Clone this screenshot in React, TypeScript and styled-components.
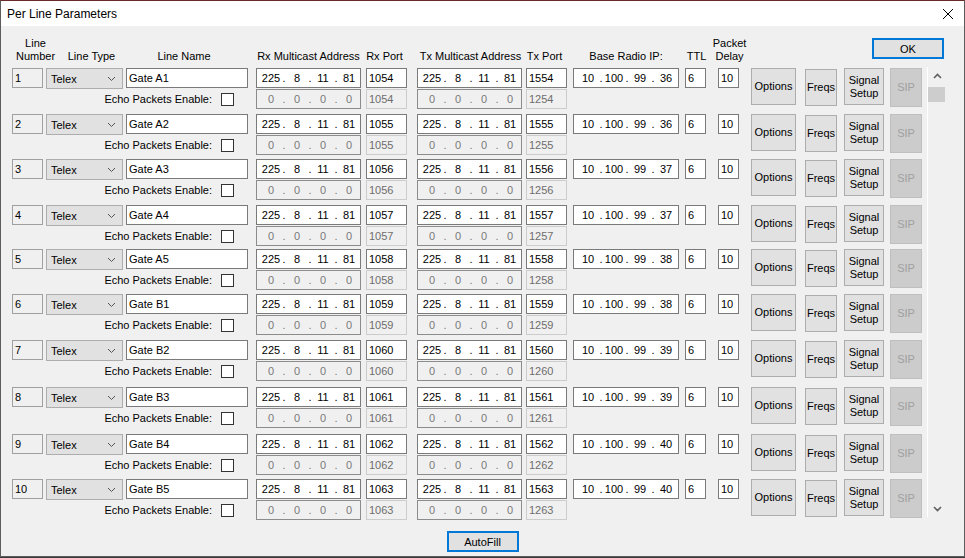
import React from 'react';
import styled, { createGlobalStyle, css } from 'styled-components';

const FONT = '"Liberation Sans", Arial, sans-serif';

// grid tracks shared by the header and each line (x of one column to x of the next)
const TRACKS = [34, 80, 130, 110, 51, 109, 47, 112, 33, 33, 54, 39, 46, 37];
const COLS = TRACKS.map(t => `${t}px`).join(' ');
const HEAD_COLS = TRACKS.slice(0, 10).map(t => `${t}px`).join(' ');

const GlobalStyle = createGlobalStyle`
  html, body {
    margin: 0;
    padding: 0;
    background: #3a3a3a;
  }
  body {
    font-family: ${FONT};
    font-size: 11px;
    color: #000;
  }
`;

// explicit cell placement inside a line's grid
interface CellProps {
  $c: number;
  $r?: number;
}
const cell = css<CellProps>`
  grid-column: ${p => p.$c};
  grid-row: ${p => p.$r || 1};
`;

const Window = styled.div`
  box-sizing: border-box;
  width: 965px;
  height: 557px;
  background: #f0f0f0;
  border: 1px solid #5c5c5c;
  border-top-color: #6b2a2a;
  display: flex;
  flex-direction: column;
  overflow: hidden;
`;

const TitleBar = styled.div`
  height: 25px;
  background: #fff;
  display: flex;
  align-items: center;
  padding: 0 10px 0 6px;
  font-size: 12px;
`;

const CloseBtn = styled.div`
  margin-left: auto;
  display: flex;
`;

const Header = styled.div`
  height: 37px;
  display: flex;
  justify-content: space-between;
  align-items: flex-start;
`;

const HeaderGrid = styled.div`
  display: grid;
  grid-template-columns: ${HEAD_COLS};
  align-items: end;
  height: 37px;
  padding-left: 11px;
`;

const HeadCell = styled.div<{ $w: number; $dx?: number }>`
  width: ${p => p.$w}px;
  margin-left: ${p => p.$dx || 0}px;
  display: flex;
  flex-direction: column;
  align-items: center;
  line-height: 13px;
  white-space: nowrap;
`;

const DialogButton = styled.button<{ $w: number }>`
  box-sizing: border-box;
  flex-shrink: 0;
  width: ${p => p.$w}px;
  height: 21px;
  padding: 0;
  background: #e1e1e1;
  border: 2px solid #0078d7;
  font-family: ${FONT};
  font-size: 11px;
  color: #000;
`;

const OkButton = styled(DialogButton)`
  margin: 12px 20px 0 0;
`;

const ListArea = styled.div`
  display: flex;
  align-items: flex-start;
  margin-top: 5px;
`;

const Rows = styled.div`
  width: 915px;
  padding-left: 11px;
  display: flex;
  flex-direction: column;
`;

const LineRow = styled.div<{ $h: number }>`
  display: grid;
  grid-template-columns: ${COLS};
  grid-template-rows: 20px 20px;
  row-gap: 1px;
  height: ${p => p.$h}px;
`;

const Field = styled.div<CellProps & { $w: number; $variant?: 'edit' | 'off' | 'readonly' }>`
  ${cell};
  box-sizing: border-box;
  width: ${p => p.$w}px;
  height: 20px;
  line-height: 18px;
  padding: 0 2px;
  white-space: nowrap;
  overflow: hidden;
  border: 1px solid ${p => (p.$variant === 'off' ? '#cccccc' : p.$variant === 'readonly' ? '#a0a0a0' : '#7a7a7a')};
  background: ${p => (p.$variant === 'off' || p.$variant === 'readonly' ? '#f0f0f0' : '#fff')};
  color: ${p => (p.$variant === 'off' ? '#6d6d6d' : '#000')};
`;

const IpBox = styled.div<CellProps & { $w: number; $off?: boolean }>`
  ${cell};
  box-sizing: border-box;
  width: ${p => p.$w}px;
  height: 20px;
  line-height: 18px;
  padding-left: 4px;
  display: flex;
  border: 1px solid ${p => (p.$off ? '#8c8c8c' : '#7a7a7a')};
  background: ${p => (p.$off ? '#f0f0f0' : '#fff')};
  color: ${p => (p.$off ? '#7a7a7a' : '#000')};
`;

const IpPart = styled.span`
  width: 20px;
  text-align: center;
`;

const IpDot = styled.span`
  width: 6px;
  text-align: center;
`;

const Select = styled.div<CellProps>`
  ${cell};
  box-sizing: border-box;
  width: 77px;
  height: 21px;
  display: flex;
  align-items: center;
  justify-content: space-between;
  padding: 0 6px 0 4px;
  background: #e1e1e1;
  border: 1px solid #adadad;
`;

const EchoLabel = styled.div`
  grid-column: 1 / 4;
  grid-row: 2;
  display: flex;
  justify-content: flex-end;
  align-items: center;
  gap: 9px;
  margin-right: 22px;
  white-space: nowrap;
`;

const Checkbox = styled.span`
  box-sizing: border-box;
  width: 13px;
  height: 13px;
  background: #fff;
  border: 1px solid #333;
`;

const ActionButton = styled.button<{ $c: number; $w: number; $off?: boolean; $top?: number }>`
  grid-column: ${p => p.$c};
  grid-row: 1 / 3;
  align-self: start;
  box-sizing: border-box;
  width: ${p => p.$w}px;
  height: ${p => (p.$off ? 39 : 37)}px;
  margin-top: ${p => p.$top || 0}px;
  padding: 0;
  line-height: 13px;
  font-family: ${FONT};
  font-size: 11px;
  background: ${p => (p.$off ? '#cccccc' : '#e1e1e1')};
  border: 1px solid ${p => (p.$off ? '#bfbfbf' : '#adadad')};
  color: ${p => (p.$off ? '#a0a0a0' : '#000')};
`;

const ScrollBar = styled.div`
  box-sizing: border-box;
  width: 19px;
  height: 450px;
  margin-top: -1px;
  border-left: 1px solid #fff;
  display: flex;
  flex-direction: column;
`;

const ArrowCell = styled.div`
  height: 17px;
  display: flex;
  align-items: center;
  justify-content: center;
`;

const Thumb = styled.div`
  margin-top: 3px;
  width: 17px;
  height: 15px;
  background: #cdcdcd;
`;

const Spacer = styled.div`
  flex: 1;
`;

const Footer = styled.div`
  display: flex;
  justify-content: center;
  padding-top: 6px;
`;

const Chevron = ({ up }: { up?: boolean }) => (
  <svg width="9" height="6" viewBox="0 0 9 6">
    <polyline
      points={up ? '1,5 4.5,1.5 8,5' : '1,1 4.5,4.5 8,1'}
      fill="none"
      stroke="#606060"
      strokeWidth="1.6"
    />
  </svg>
);

const Ip = ({ value, w, c, r, off }: { value: string; w: number; c: number; r?: number; off?: boolean }) => {
  const parts = value.split('.');
  return (
    <IpBox $w={w} $c={c} $r={r} $off={off}>
      {parts.map((p, i) => (
        <React.Fragment key={i}>
          <IpPart>{p}</IpPart>
          {i < 3 && <IpDot>.</IpDot>}
        </React.Fragment>
      ))}
    </IpBox>
  );
};

const names = ['Gate A1', 'Gate A2', 'Gate A3', 'Gate A4', 'Gate A5', 'Gate B1', 'Gate B2', 'Gate B3', 'Gate B4', 'Gate B5'];
const heights = [46, 45, 46, 44, 45, 46, 47, 47, 45, 46];

const lines = names.map((name, i) => ({
  num: i + 1,
  name,
  rxPort: 1054 + i,
  txPort: 1554 + i,
  echoTx: 1254 + i,
  base: `10.100.99.${36 + Math.floor(i / 2)}`,
  h: heights[i],
}));

export default function App() {
  return (
    <>
      <GlobalStyle />
      <Window>
        <TitleBar>
          Per Line Parameters
          <CloseBtn>
            <svg width="12" height="12" viewBox="0 0 12 12">
              <path d="M1 1 L11 11 M11 1 L1 11" stroke="#000" strokeWidth="1" />
            </svg>
          </CloseBtn>
        </TitleBar>

        <Header>
          <HeaderGrid>
            <HeadCell $w={31} $dx={8}><span>Line</span><span>Number</span></HeadCell>
            <HeadCell $w={77} $dx={7}>Line Type</HeadCell>
            <HeadCell $w={122} $dx={-3}>Line Name</HeadCell>
            <HeadCell $w={105}>Rx Multicast Address</HeadCell>
            <HeadCell $w={41} $dx={-2}>Rx Port</HeadCell>
            <HeadCell $w={105} $dx={1}>Tx Multicast Address</HeadCell>
            <HeadCell $w={41} $dx={-2}>Tx Port</HeadCell>
            <HeadCell $w={106}>Base Radio IP:</HeadCell>
            <HeadCell $w={21} $dx={1}>TTL</HeadCell>
            <HeadCell $w={21} $dx={1}><span>Packet</span><span>Delay</span></HeadCell>
          </HeaderGrid>
          <OkButton $w={72}>OK</OkButton>
        </Header>

        <ListArea>
          <Rows>
            {lines.map(l => (
              <LineRow key={l.num} $h={l.h}>
                <Field $c={1} $w={31} $variant="readonly">{l.num}</Field>
                <Select $c={2}>
                  Telex
                  <svg width="9" height="6" viewBox="0 0 9 6">
                    <polyline points="1,1 4.5,4.5 8,1" fill="none" stroke="#555" strokeWidth="1" />
                  </svg>
                </Select>
                <Field $c={3} $w={122}>{l.name}</Field>
                <Ip c={4} value="225.8.11.81" w={105} />
                <Field $c={5} $w={41}>{l.rxPort}</Field>
                <Ip c={6} value="225.8.11.81" w={105} />
                <Field $c={7} $w={41}>{l.txPort}</Field>
                <Ip c={8} value={l.base} w={106} />
                <Field $c={9} $w={21}>6</Field>
                <Field $c={10} $w={21}>10</Field>
                <ActionButton $c={11} $w={45}>Options</ActionButton>
                <ActionButton $c={12} $w={32} $top={1}>Freqs</ActionButton>
                <ActionButton $c={13} $w={40}>Signal<br />Setup</ActionButton>
                <ActionButton $c={14} $w={32} $off>SIP</ActionButton>

                <EchoLabel>
                  Echo Packets Enable:
                  <Checkbox />
                </EchoLabel>
                <Ip c={4} r={2} value="0.0.0.0" w={105} off />
                <Field $c={5} $r={2} $w={41} $variant="off">{l.rxPort}</Field>
                <Ip c={6} r={2} value="0.0.0.0" w={105} off />
                <Field $c={7} $r={2} $w={41} $variant="off">{l.echoTx}</Field>
              </LineRow>
            ))}
          </Rows>
          <ScrollBar>
            <ArrowCell><Chevron up /></ArrowCell>
            <Thumb />
            <Spacer />
            <ArrowCell><Chevron /></ArrowCell>
          </ScrollBar>
        </ListArea>

        <Footer>
          <DialogButton $w={72}>AutoFill</DialogButton>
        </Footer>
      </Window>
    </>
  );
}
